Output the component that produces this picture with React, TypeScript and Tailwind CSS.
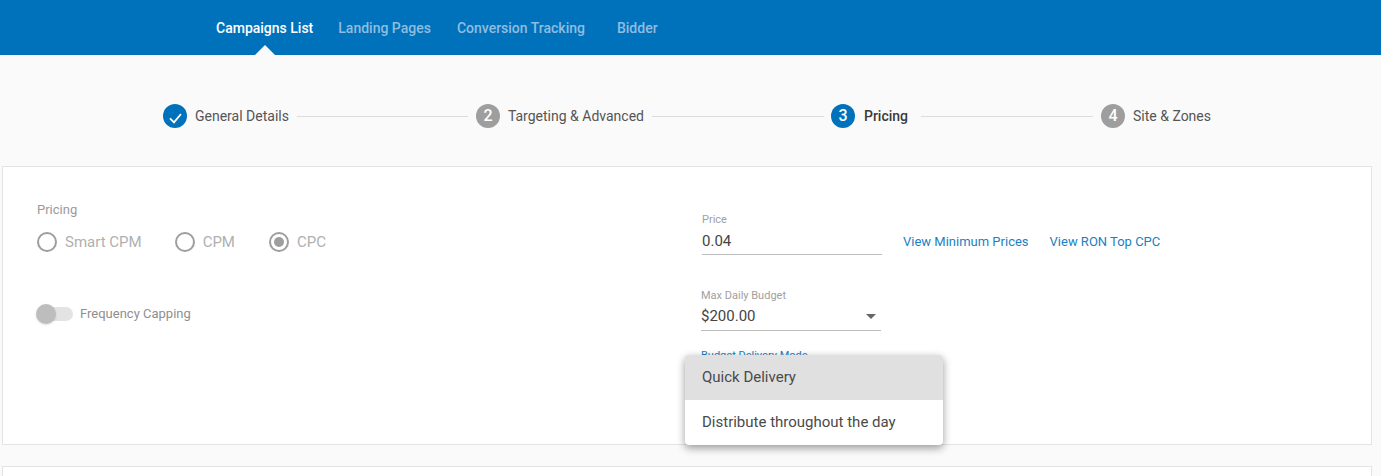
const navItems = [
  { label: "Campaigns List", active: true, className: "" },
  { label: "Landing Pages", active: false, className: "ml-[25px]" },
  { label: "Conversion Tracking", active: false, className: "ml-[26px]" },
  { label: "Bidder", active: false, className: "ml-[32px]" },
];

const Step = ({ number, label, state }: { number?: number; label: string; state: "done" | "active" | "todo" }) => (
  <div className="flex items-center shrink-0">
    <div
      className={`w-6 h-6 rounded-full flex items-center justify-center text-white text-[16px] font-medium ${
        state === "todo" ? "bg-[#9e9e9e]" : "bg-[#0072bc]"
      }`}
    >
      {state === "done" ? (
        <svg width="24" height="24" viewBox="0 0 24 24" fill="none">
          <path d="M7 14.3 L11 18.4 L18 10" stroke="white" strokeWidth="1.8" />
        </svg>
      ) : (
        number
      )}
    </div>
    <span className={`text-[14px] ${state === "active" ? "ml-[9px] text-[#3a3a3a] font-medium" : "ml-2 text-[#555555]"}`}>
      {label}
    </span>
  </div>
);

const Radio = ({ label, checked, className }: { label: string; checked?: boolean; className?: string }) => (
  <div className={`flex items-center ${className ?? ""}`}>
    <div className="w-5 h-5 rounded-full border-2 border-[#9e9e9e] flex items-center justify-center">
      {checked && <div className="w-2.5 h-2.5 rounded-full bg-[#9e9e9e]" />}
    </div>
    <span className="ml-2 text-[15px] text-[#b0b0b0]">{label}</span>
  </div>
);

export default function App() {
  return (
    <div className="h-[476px] overflow-hidden bg-[#fafafa] font-['Roboto',sans-serif]">
      <header className="relative h-[55px] bg-[#0072bc] flex items-center pl-[216px] pt-0.5">
        {navItems.map((item) => (
          <a
            key={item.label}
            className={`text-[14px] font-medium ${item.className} ${item.active ? "text-white" : "text-[#8fbde0]"}`}
          >
            {item.label}
          </a>
        ))}
        <div className="absolute left-[255px] bottom-0 w-0 h-0 border-x-[10px] border-x-transparent border-b-[10px] border-b-[#fafafa]" />
      </header>

      <div className="h-[111px] flex items-center pl-[163px] pt-[11px]">
        <Step state="done" label="General Details" />
        <div className="w-[171px] h-px bg-[#dcdcdc] mx-2" />
        <Step number={2} state="todo" label="Targeting & Advanced" />
        <div className="w-[172px] h-px bg-[#dcdcdc] ml-2 mr-[7px]" />
        <Step number={3} state="active" label="Pricing" />
        <div className="w-[172px] h-px bg-[#dcdcdc] ml-[13px] mr-2" />
        <Step number={4} state="todo" label="Site & Zones" />
      </div>

      <section className="relative ml-0.5 w-[1370px] h-[279px] bg-white border border-[#e4e4e4] flex">
        <div className="w-[699px] pl-[33px] pt-[35px] shrink-0">
          <div className="text-[13px] leading-4 text-[#9a9a9a] pl-px">Pricing</div>
          <div className="flex items-center mt-[14px] h-5 pl-px">
            <Radio label="Smart CPM" />
            <Radio label="CPM" className="ml-[33px]" />
            <Radio label="CPC" checked className="ml-[34px]" />
          </div>
          <div className="flex items-center mt-[51px] h-[22px]">
            <div className="relative w-[37px] h-[22px] flex items-center">
              <div className="w-[34px] h-3.5 ml-[3px] rounded-full bg-[#e3e3e3]" />
              <div className="absolute left-0 top-px w-5 h-5 rounded-full bg-[#bdbdbd] shadow-sm" />
            </div>
            <span className="ml-[7px] text-[13px] text-[#8f8f8f]">Frequency Capping</span>
          </div>
        </div>

        <div className="pt-[47px]">
          <div className="flex items-end">
            <div className="w-[180px]">
              <div className="text-[11px] leading-3 text-[#a0a0a0]">Price</div>
              <div className="mt-[2px] h-[27px] border-b border-[#bdbdbd] text-[15px] leading-[27px] text-[#444444]">
                0.04
              </div>
            </div>
            <a className="ml-[21px] mb-1 text-[13px] text-[#1a7fc4]">View Minimum Prices</a>
            <a className="ml-[21px] mb-1 text-[13px] text-[#1a7fc4]">View RON Top CPC</a>
          </div>
          <div className="w-[180px] mt-[35px] -ml-px">
            <div className="text-[11px] leading-3 text-[#a0a0a0]">Max Daily Budget</div>
            <div className="mt-[2px] h-[27px] border-b border-[#bdbdbd] flex items-center justify-between pr-[5px] pb-0.5 text-[15px] text-[#444444]">
              <span>$200.00</span>
              <div className="w-0 h-0 border-x-[5px] border-x-transparent border-t-[5px] border-t-[#666666]" />
            </div>
          </div>
          <div className="mt-[19px] -ml-px text-[11px] leading-3 text-[#1a7fc4]">Budget Delivery Mode</div>
        </div>

        <div className="absolute left-[682px] top-[188px] w-[258px] bg-white rounded-[4px] overflow-hidden shadow-[0_3px_8px_rgba(0,0,0,0.4)] text-[15px] text-[#4a4a4a]">
          <div className="h-[45px] bg-[#e0e0e0] flex items-center pl-[17px]">Quick Delivery</div>
          <div className="h-[45px] flex items-center pl-[17px]">Distribute throughout the day</div>
        </div>
      </section>

      <section className="ml-0.5 w-[1370px] h-[20px] mt-[21px] bg-white border border-[#e4e4e4]" />
    </div>
  );
}
